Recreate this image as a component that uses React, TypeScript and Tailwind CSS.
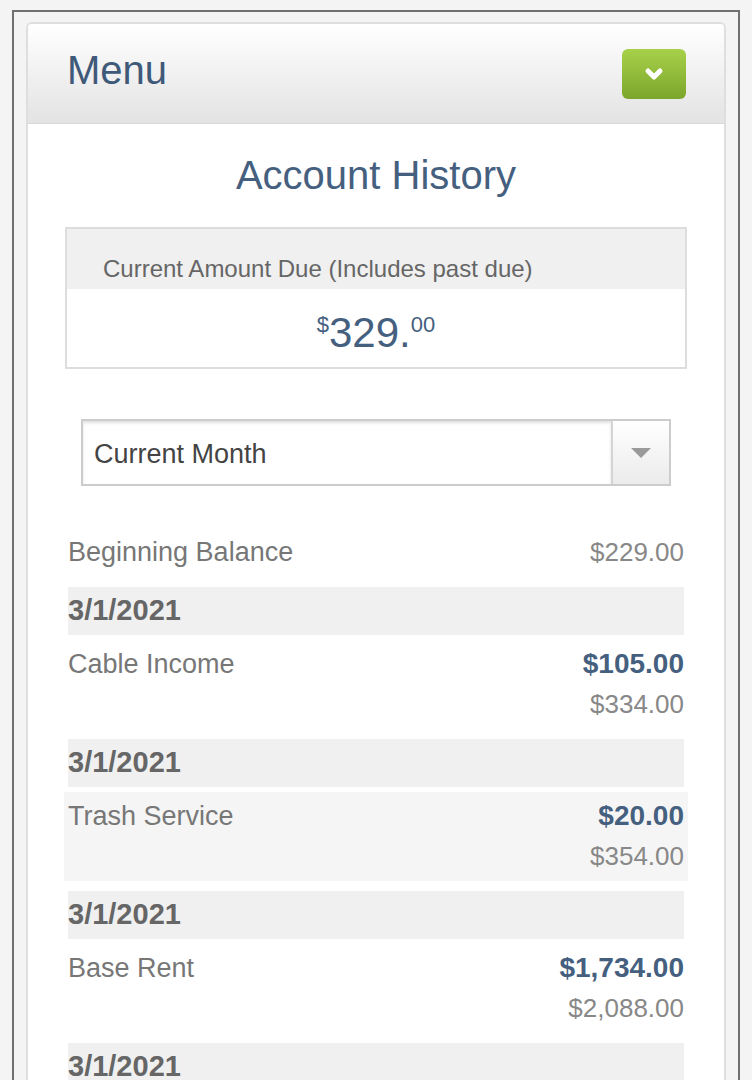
import { ChevronDown } from "lucide-react";

type Entry = {
  date: string;
  label?: string;
  amount?: string;
  balance?: string;
  highlight?: boolean;
};

const entries: Entry[] = [
  { date: "3/1/2021", label: "Cable Income", amount: "$105.00", balance: "$334.00" },
  { date: "3/1/2021", label: "Trash Service", amount: "$20.00", balance: "$354.00", highlight: true },
  { date: "3/1/2021", label: "Base Rent", amount: "$1,734.00", balance: "$2,088.00" },
  { date: "3/1/2021" },
];

function EntryRow({ entry }: { entry: Entry }) {
  return (
    <div>
      <div className="h-[48px] bg-[#f0f0f0] flex items-center text-[29px] font-bold text-[#666]">
        {entry.date}
      </div>
      {entry.label && (
        <div className="pt-[5px] pb-[10px]">
          <div
            className={`-mx-[4px] px-[4px] pt-[4px] pb-[5px] leading-[40px] ${
              entry.highlight ? "bg-[#f5f5f5]" : ""
            }`}
          >
            <div className="flex justify-between">
              <span className="text-[27px] text-[#777]">{entry.label}</span>
              <span className="text-[28px] font-bold text-[#45607f]">{entry.amount}</span>
            </div>
            <div className="text-right text-[26px] text-[#888]">{entry.balance}</div>
          </div>
        </div>
      )}
    </div>
  );
}

export default function App() {
  return (
    <div className="h-[1080px] overflow-hidden bg-[#f4f4f4] px-[12px] pt-[10px] font-['Liberation_Sans',Arial,sans-serif]">
      <div className="h-full border-x-2 border-t-2 border-[#707070] px-[12px] pt-[10px]">
        <div className="h-full bg-white border-x-2 border-t-2 border-[#dedede] rounded-t-[6px]">
          {/* menu bar */}
          <div className="h-[100px] flex items-center justify-between pl-[39px] pr-[38px] bg-linear-to-b from-white to-[#e3e3e3] border-b border-[#d8d8d8] rounded-t-[4px]">
            <span className="mb-[7px] text-[40px] text-[#3f5979]">Menu</span>
            <button
              type="button"
              className="w-[64px] h-[50px] rounded-[6px] bg-linear-to-b from-[#a8d14a] to-[#7ba62b] flex items-center justify-center"
            >
              <ChevronDown className="w-[24px] h-[24px] text-white" strokeWidth={5} />
            </button>
          </div>

          <div className="px-[37px]">
            <h1 className="mt-[27px] text-center text-[40px] leading-[48px] text-[#45607f]">
              Account History
            </h1>

            {/* amount due */}
            <div className="mt-[28px] border-2 border-[#dddddd]">
              <div className="h-[60px] bg-[#f0f0f0] pl-[36px] pt-[26px] text-[24px] leading-[28px] text-[#666]">
                Current Amount Due (Includes past due)
              </div>
              <div className="h-[78px] flex items-center justify-center pt-[10px] text-[#45607f]">
                <div className="flex items-start leading-none">
                  <span className="mt-[2px] text-[22px]">$</span>
                  <span className="text-[42px]">329.</span>
                  <span className="mt-[2px] text-[22px]">00</span>
                </div>
              </div>
            </div>

            {/* period select */}
            <div className="mt-[50px] mx-[16px] h-[67px] border-2 border-[#cccccc] flex">
              <div className="flex-1 flex items-center pl-[11px] pt-[4px] text-[27px] text-[#444] shadow-[inset_0_2px_3px_rgba(0,0,0,0.12)]">
                Current Month
              </div>
              <div className="w-[58px] border-l-2 border-[#d4d4d4] bg-linear-to-b from-white to-[#ebebeb] flex items-center justify-center">
                <svg width="20" height="10" viewBox="0 0 20 10">
                  <polygon points="0,0 20,0 10,10" fill="#9a9a9a" />
                </svg>
              </div>
            </div>

            {/* history list */}
            <div className="mx-[3px] mt-[46px]">
              <div className="flex justify-between leading-[40px] pb-[15px]">
                <span className="text-[27px] text-[#777]">Beginning Balance</span>
                <span className="text-[26px] text-[#888]">$229.00</span>
              </div>
              {entries.map((entry, i) => (
                <EntryRow key={i} entry={entry} />
              ))}
            </div>
          </div>
        </div>
      </div>
    </div>
  );
}
